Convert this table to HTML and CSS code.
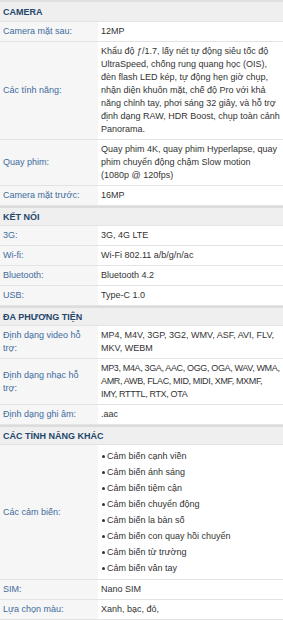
FILE: index.html
```html
<!DOCTYPE html>
<html lang="vi">
<head>
<meta charset="utf-8">
<title>Thông số kỹ thuật</title>
<link rel="stylesheet" href="styles.css">
</head>
<body>
<table class="specs">
  <colgroup><col class="col-lbl"><col class="col-val"></colgroup>
  <tbody>
    <tr class="sec first"><th colspan="2">CAMERA</th></tr>
    <tr><td class="lbl">Camera mặt sau:</td><td class="val">12MP</td></tr>
    <tr><td class="lbl">Các tính năng:</td><td class="val">Khẩu độ ƒ/1.7, lấy nét tự động siêu tốc độ UltraSpeed, chống rung quang học (OIS), đèn flash LED kép, tự động hẹn giờ chụp, nhận diện khuôn mặt, chế độ Pro với khả năng chỉnh tay, phơi sáng 32 giây, và hỗ trợ định dạng RAW, HDR Boost, chụp toàn cảnh Panorama.</td></tr>
    <tr><td class="lbl">Quay phim:</td><td class="val">Quay phim 4K, quay phim Hyperlapse, quay phim chuyển động chậm Slow motion (1080p @ 120fps)</td></tr>
    <tr><td class="lbl">Camera mặt trước:</td><td class="val">16MP</td></tr>

    <tr class="sec"><th colspan="2">KẾT NỐI</th></tr>
    <tr><td class="lbl">3G:</td><td class="val">3G, 4G LTE</td></tr>
    <tr><td class="lbl">Wi-fi:</td><td class="val">Wi-Fi 802.11 a/b/g/n/ac</td></tr>
    <tr><td class="lbl">Bluetooth:</td><td class="val">Bluetooth 4.2</td></tr>
    <tr><td class="lbl">USB:</td><td class="val">Type-C 1.0</td></tr>

    <tr class="sec"><th colspan="2">ĐA PHƯƠNG TIỆN</th></tr>
    <tr><td class="lbl">Định dạng video hỗ trợ:</td><td class="val">MP4, M4V, 3GP, 3G2, WMV, ASF, AVI, FLV, MKV, WEBM</td></tr>
    <tr><td class="lbl">Định dạng nhạc hỗ trợ:</td><td class="val codes">MP3, M4A, 3GA, AAC, OGG, OGA, WAV, WMA, AMR, AWB, FLAC, MID, MIDI, XMF, MXMF, IMY, RTTTL, RTX, OTA</td></tr>
    <tr><td class="lbl">Định dạng ghi âm:</td><td class="val">.aac</td></tr>

    <tr class="sec"><th colspan="2">CÁC TÍNH NĂNG KHÁC</th></tr>
    <tr><td class="lbl">Các cảm biến:</td><td class="val">
      <ul class="sensors">
        <li>Cảm biến cạnh viền</li>
        <li>Cảm biến ánh sáng</li>
        <li>Cảm biến tiệm cận</li>
        <li>Cảm biến chuyển động</li>
        <li>Cảm biến la bàn số</li>
        <li>Cảm biến con quay hồi chuyển</li>
        <li>Cảm biến từ trường</li>
        <li>Cảm biến vân tay</li>
      </ul>
    </td></tr>
    <tr><td class="lbl">SIM:</td><td class="val">Nano SIM</td></tr>
    <tr><td class="lbl">Lựa chọn màu:</td><td class="val">Xanh, bạc, đỏ,</td></tr>
  </tbody>
</table>
</body>
</html>
```

FILE: styles.css
```css
html, body {
  margin: 0;
  padding: 0;
  background: #ffffff;
}

body {
  font-family: "Liberation Sans", Arial, sans-serif;
  font-size: 9px;
  line-height: 13px;
  color: #333333;
}

.specs {
  width: 283px;
  border-collapse: separate;
  border-spacing: 0;
  table-layout: fixed;
  border-top: 2px solid #e0e0e0;
}

.col-lbl {
  width: 98px;
}

.col-val {
  width: 185px;
}

.specs td,
.specs th {
  padding: 3px;
  border-bottom: 1px solid #e3e3e3;
  vertical-align: middle;
  text-align: left;
}

.specs .sec th {
  background: #efeff0;
  color: #24466b;
  font-weight: bold;
  font-size: 9px;
  border-top: 2px solid #dcdcdc;
  padding: 3px 3px 1px;
}

.specs .sec.first th {
  border-top: 0;
  padding: 4px 3px 2px;
}

.specs .lbl {
  background: #f6f6f7;
  color: #3f6b9c;
  padding-right: 7px;
}

.specs .val {
  background: #ffffff;
  color: #333333;
}

.specs .codes {
  letter-spacing: -0.35px;
}

.sensors {
  list-style: none;
  margin: 0;
  padding: 0;
}

.sensors li {
  line-height: 16px;
  padding-left: 6px;
  position: relative;
}

.sensors li::before {
  content: "";
  position: absolute;
  left: 1px;
  top: 7px;
  width: 3px;
  height: 3px;
  border-radius: 50%;
  background: #333333;
}
```
